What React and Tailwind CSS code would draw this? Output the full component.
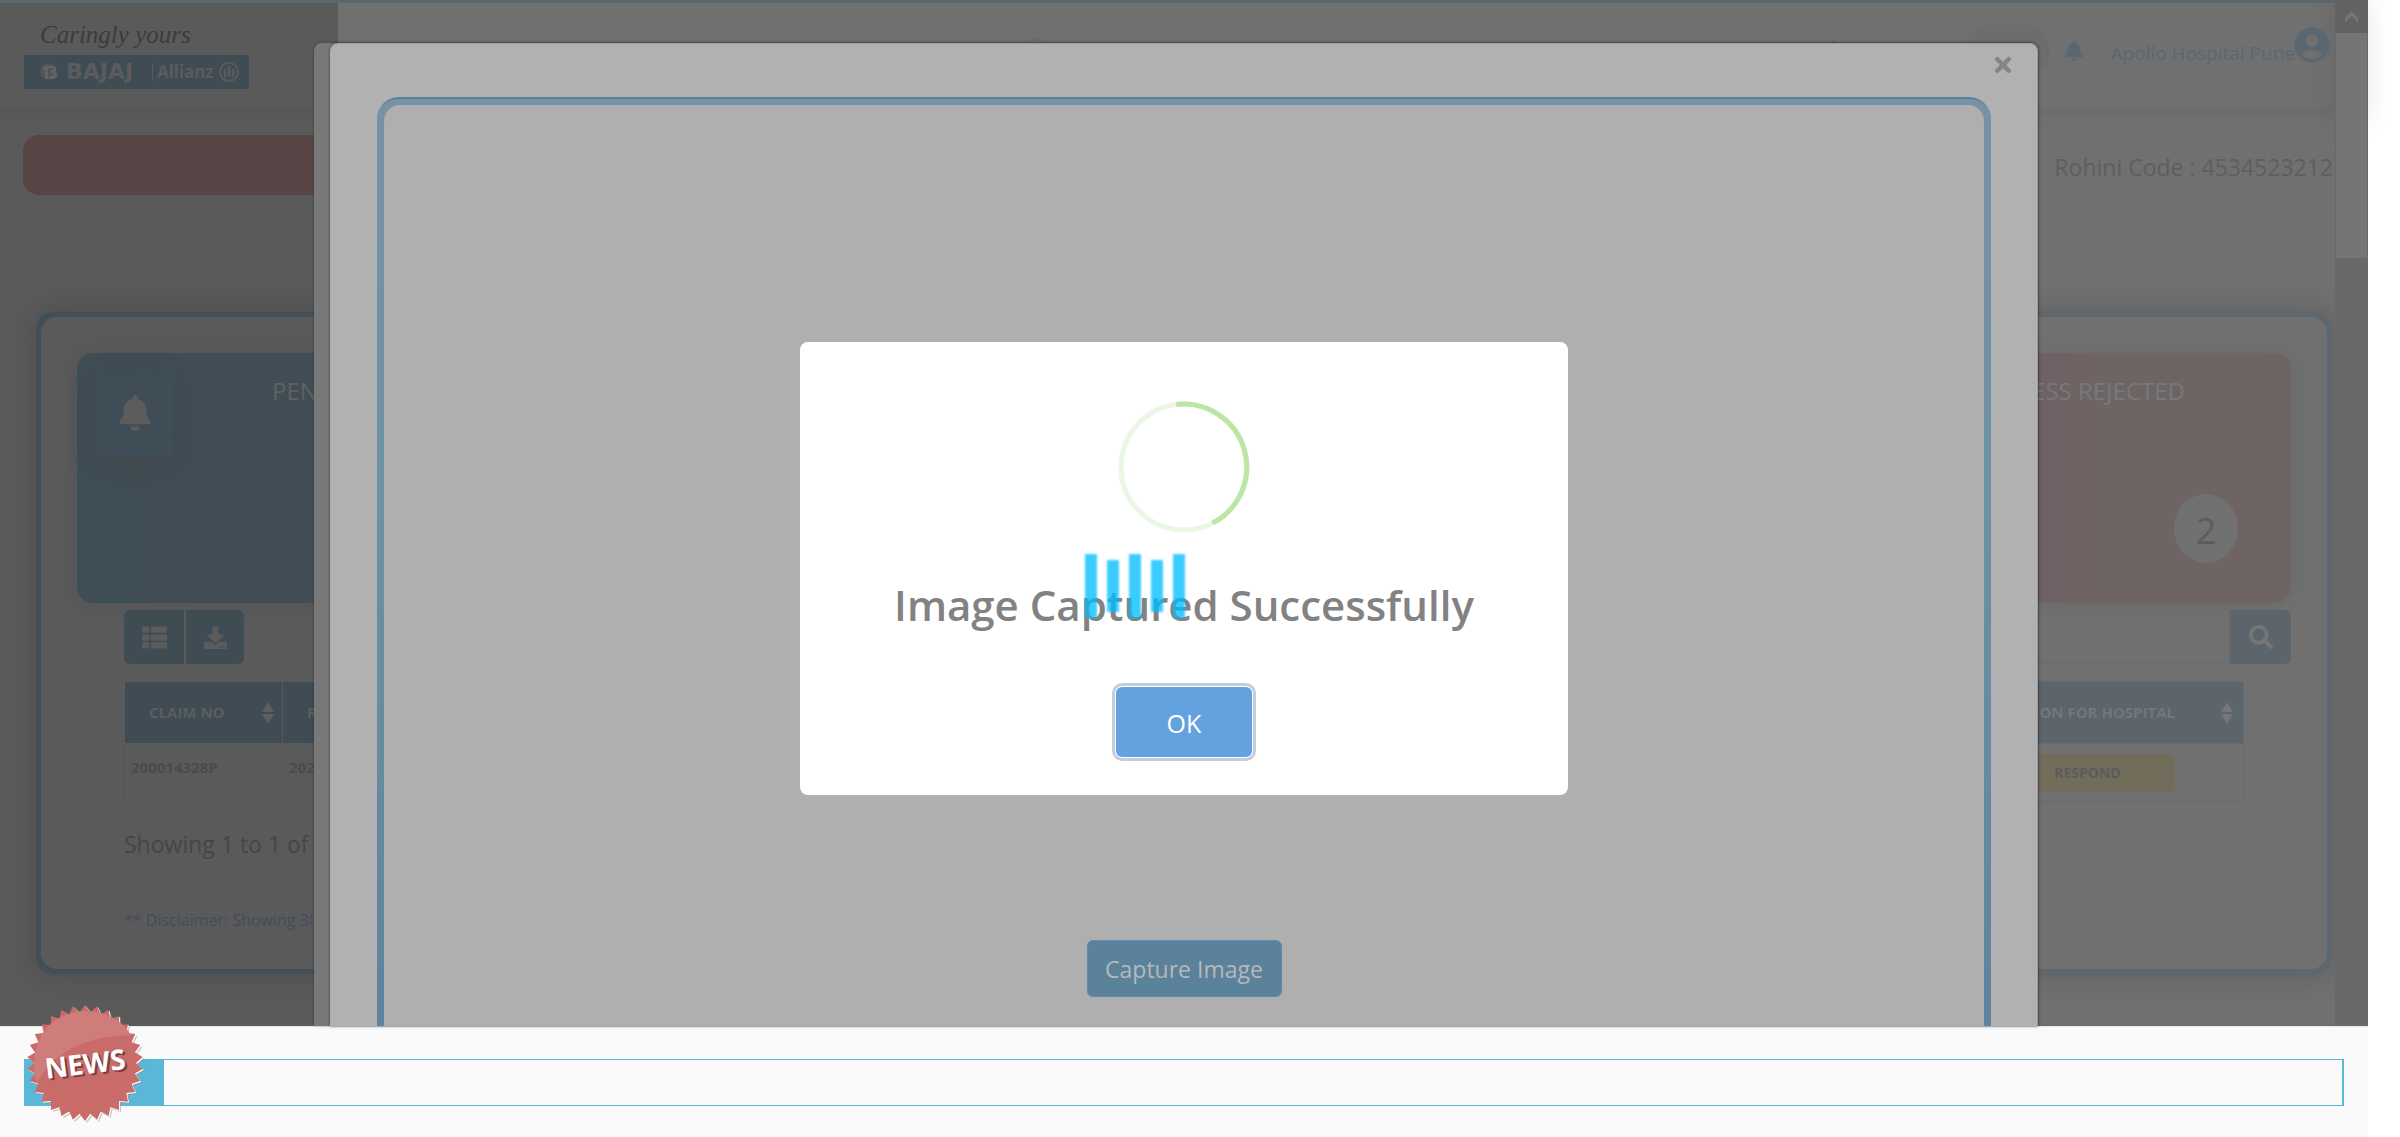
import React from "react";
import { FaBell, FaThList, FaDownload, FaSearch, FaTimes } from "react-icons/fa";
import { MdAccountCircle } from "react-icons/md";

function Logo() {
  return (
    <a href="#" className="flex w-[225px] flex-col">
      <span className="h-[37px] pl-4 font-['Z003','Liberation_Serif',cursive] text-[25px] leading-[34px] text-[#3c3c3c] italic">
        Caringly yours
      </span>
      <span className="flex h-[34px] items-center bg-[#3f4c54] pl-4 text-[#5b5b5d]">
        <svg viewBox="0 0 18 18" className="mr-2 size-[18px]" aria-hidden="true">
          <circle cx="8" cy="8" r="8" fill="#505559" />
          <path d="M3 4l5-2v14H5V7H3zM8 3h5q4 0 3 4l-1 2q3 1 2 4-1 3-4 3H9v-3h4v-3h-2V7h3V5H8z" fill="#636363" />
        </svg>
        <span className="w-[82px] font-['DejaVu_Sans',sans-serif] text-[22px] leading-5 font-bold">BAJAJ</span>
        <span className="mx-1 h-[18px] w-px bg-[#5b5b5d]" />
        <span className="w-[62px] font-['Noto_Sans',sans-serif] text-[17px] leading-5 font-bold">Allianz</span>
        <svg viewBox="0 0 20 20" className="size-5" fill="none" stroke="#5b5b5d" aria-hidden="true">
          <circle cx="10" cy="10" r="9" strokeWidth="2" />
          <path d="M6 7v8M10 4v11M14 7v8" strokeWidth="2.6" />
        </svg>
      </span>
    </a>
  );
}

function PageHeader() {
  return (
    <header className="flex h-[108px] items-start justify-between border-t-[3px] border-[#5b666c] pl-6 shadow-[0_8px_14px_-4px_rgba(0,0,0,0.06)]">
      <div className="pt-[15px]"><Logo /></div>
      <div className="mt-[35px] size-[26px] rounded-full border-[3px] border-[#65705f]" />
      <div className="flex items-center pt-[21px]">
        <FaBell className="mr-[119px] size-5 text-[#5a6770]" />
        <div className="mr-[14px] h-[52px] w-[88px] rounded-full bg-[#6d6d70]" />
        <button type="button" aria-label="Notifications" className="mr-[27px] text-[#5a6770]">
          <FaBell className="size-5" />
        </button>
        <span className="pt-1 text-[19px] leading-7 text-[#5b6871]">Apollo Hospital Pune</span>
        <MdAccountCircle className="mr-[2px] -ml-1 mb-3 size-[42px] text-[#5a6770]" />
      </div>
    </header>
  );
}

function SortArrows() {
  return (
    <svg viewBox="0 0 12 24" className="-mr-4 h-6 w-3" fill="currentColor" aria-hidden="true">
      <path d="M6 1l6 10H0zM0 13h12L6 23z" />
    </svg>
  );
}

function ClaimsTable() {
  const head = "border border-[#565b5e] px-6 text-left font-bold";
  const leftCell = "border border-[#565656] pt-[11px] pl-[6px] text-[15px] leading-6";
  return (
    <table className="mt-[17px] w-[2120px] table-fixed border-collapse text-[15px]">
      <thead>
        <tr className="h-[62px]">
          <th className={head + " w-[158px] bg-[#3f4c53] text-[#5c5e60]"}>
            <span className="flex items-center justify-between whitespace-nowrap">CLAIM NO<SortArrows /></span>
          </th>
          <th className={head + " w-[1649px] bg-[#3f4c53] text-[#5c5e60]"}>REGISTRATION DATE</th>
          <th className="border border-[#666b6e] bg-[#5b656b] pr-[26px] font-bold text-[#747679]">
            <span className="flex items-center justify-end gap-[46px] whitespace-nowrap">ACTION FOR HOSPITAL<SortArrows /></span>
          </th>
        </tr>
      </thead>
      <tbody>
        <tr className="h-[57px] align-top font-bold text-[#454d52]">
          <td className={leftCell}>200014328P</td>
          <td className={leftCell}>2021</td>
          <td className="border border-[#6b6b6b] px-[68px] pt-[10px]">
            <button type="button" className="h-[38px] w-full rounded-md bg-[#726c5a] text-sm font-bold text-[#5c5c5c]">
              RESPOND
            </button>
          </td>
        </tr>
      </tbody>
    </table>
  );
}

function Dashboard() {
  return (
    <section className="mt-[117px] mr-[3px] ml-9 h-[662px] rounded-2xl bg-[linear-gradient(to_right,#434f56_338px,#5e676d_338px)] p-[5px] shadow-[0_0_24px_4px_rgba(0,0,0,0.12)]">
      <div className="h-full rounded-2xl bg-[linear-gradient(to_right,#5a5a5a_300px,#707070_300px)] px-9 pt-9">
        <div className="flex h-[250px] justify-between">
          <div className="flex w-[500px] rounded-2xl bg-[linear-gradient(to_right,#3f4d54,#444e57)] shadow-[0_0_20px_rgba(0,0,0,0.08)]">
            <div className="mt-5 ml-[19px] grid h-[84px] w-[77px] place-items-center bg-[#3f4d56] pb-1 shadow-[0_8px_24px_rgba(64,64,64,0.4)]">
              <FaBell className="size-9 text-[#5c5c5c]" />
            </div>
            <h2 className="mt-5 ml-[99px] text-[24px] leading-9 text-[#5f6163]">PENDING</h2>
          </div>
          <div className="flex w-[500px] flex-col rounded-2xl bg-[linear-gradient(to_right,#6e5f63_45%,#6f6464_62%)] shadow-[0_0_20px_rgba(0,0,0,0.06)]">
            <h2 className="mt-5 pr-[106px] text-right text-[24px] leading-9 text-[#76797b]">CASHLESS REJECTED</h2>
            <div className="mt-[85px] mr-[53px] grid h-[69px] w-16 place-items-center self-end rounded-[50%] bg-[#717171] pt-1 text-[36px] text-[#5c5c5c]">2</div>
          </div>
        </div>
        <div className="mt-[7px] flex justify-between pl-[47px]">
          <div className="flex gap-[2px] text-[#5b5b5b]">
            <button type="button" aria-label="List view" className="grid h-[54px] w-[60px] place-items-center rounded-l-md bg-[#3f4c53]"><FaThList className="size-[25px]" /></button>
            <button type="button" aria-label="Download" className="grid h-[54px] w-[58px] place-items-center rounded-r-md bg-[#3f4c53]"><FaDownload className="size-[23px]" /></button>
          </div>
          <div className="flex">
            <input type="search" aria-label="Search claims" className="h-[54px] w-[340px] border border-[#6b6b6b]" />
            <button type="button" aria-label="Search" className="grid h-[54px] w-[61px] place-items-center rounded-r-md bg-[#5b656b] text-[#767676]"><FaSearch className="size-6" /></button>
          </div>
        </div>
        <div className="pl-[47px]">
          <ClaimsTable />
          <p className="mt-[25px] text-[23px] leading-9 text-[#464646]">Showing 1 to 1 of 1 entries</p>
          <p className="mt-[44px] text-base leading-7 text-[#424d5c]">** Disclaimer: Showing 30 days data</p>
        </div>
      </div>
    </section>
  );
}

function Scrollbar() {
  return (
    <div className="w-[33px] bg-[#696969]">
      <div className="grid h-[33px] place-items-center bg-[#636363]">
        <svg viewBox="0 0 13 12" className="h-3 w-[13px]" fill="#757575" aria-hidden="true"><path d="M0 7L6.500 0L13 7V12L6.500 5L0 12z" /></svg>
      </div>
      <div className="mx-px h-[225px] bg-[#757575]" />
    </div>
  );
}

function CaptureModal() {
  return (
    <div className="absolute inset-x-0 top-[43px] bottom-0 flex pr-[330px] pl-[314px]">
      <div className="flex flex-1 rounded-t-lg bg-[#787878] pl-4 shadow-[0_0_3px_rgba(0,0,0,0.3)]">
        <div className="flex flex-1 flex-col rounded-t-lg border-t border-r border-[#9c9c9c] bg-[#b1b1b1] pr-[46px] pl-[47px] shadow-[0_0_3px_rgba(0,0,0,0.5)]">
          <button type="button" aria-label="Close" className="mt-[9px] -mr-6 grid size-6 place-items-center self-end text-[#858585]">
            <FaTimes className="size-6" />
          </button>
          <div className="mt-5 flex flex-1 rounded-t-[22px] border-t-2 border-[#5b7f96] bg-[linear-gradient(to_bottom,#7792a5,#6d90a4_45%,#5f839c)] px-[7px] pt-[6px]">
            <div className="flex flex-1 items-end justify-center rounded-t-2xl bg-[#afafaf] pb-[29px]">
              <button type="button" className="h-[57px] w-[195px] rounded-md border border-[#6288b4] bg-[#5b829b] pt-[2px] text-[23px] text-[#b5b8ba]">
                Capture Image
              </button>
            </div>
          </div>
        </div>
      </div>
    </div>
  );
}

function SuccessAlert() {
  return (
    <div className="absolute inset-x-0 top-[342px] flex justify-center">
      <div role="alertdialog" aria-labelledby="alert-title" className="relative flex h-[453px] w-[768px] flex-col items-center rounded-lg bg-white">
        <svg viewBox="0 0 130 130" className="mt-[59px] size-[132px]" fill="none" strokeWidth="5" aria-hidden="true">
          <circle cx="65" cy="65" r="62" stroke="#ebf6e4" />
          <path d="M57.400 3.500A62 62 0 0 1 93.100 120.200" stroke="#bce6a5" />
        </svg>
        <h1 id="alert-title" className="mt-10 text-[42px] leading-[64px] font-semibold whitespace-nowrap text-[#828282]">
          Image Captured Successfully
        </h1>
        <button type="button" className="mt-[50px] h-[70px] w-[136px] rounded-md bg-[#63a1df] pt-1 text-[25px] text-white shadow-[0_0_0_1px_#ffffff,0_0_0_4px_#c0cfde]">
          OK
        </button>
        <div className="absolute top-[212px] left-[285px] flex items-center gap-[10px]" role="status" aria-label="Loading">
          <span className="h-16 w-3 bg-[rgba(0,188,255,0.77)] blur-[1px]" />
          <span className="h-[52px] w-3 bg-[rgba(0,188,255,0.77)] blur-[1px]" />
          <span className="h-16 w-3 bg-[rgba(0,188,255,0.77)] blur-[1px]" />
          <span className="h-[52px] w-3 bg-[rgba(0,188,255,0.77)] blur-[1px]" />
          <span className="h-16 w-3 bg-[rgba(0,188,255,0.77)] blur-[1px]" />
        </div>
      </div>
    </div>
  );
}

const sealPoints = Array.from({ length: 60 }, (_, i) => {
  const r = i % 2 ? 51 : 58;
  const a = (i * Math.PI) / 30 - Math.PI / 2;
  return `${(60 + r * Math.cos(a)).toFixed(1)},${(60 + r * Math.sin(a)).toFixed(1)}`;
}).join(" ");

function NewsBar() {
  return (
    <footer className="h-[111px] border-t border-[#e6e6ee] bg-[#fafafa] pt-8 pr-6 pl-6">
      <div className="relative h-[47px] border border-r-2 border-[#5bb7d7]">
        <div className="h-full w-[139px] bg-[#5bb7d7]" />
        <svg viewBox="0 0 120 120" className="absolute -top-[57px] left-0 size-[120px]" role="img" aria-label="News">
          <polygon points={sealPoints} fill="#8b8b8b" opacity="0.5" transform="translate(2 2)" />
          <polygon points={sealPoints} fill="#ffffff" transform="translate(1 1)" />
          <polygon points={sealPoints} fill="#c96b69" />
          <path d="M12 80Q36 34 106 32Q92 9 60 8Q12 12 9 60Q9 72 12 80z" fill="#cf7d7a" />
          <g transform="rotate(-7 60 60)" fontFamily="Open Sans, sans-serif" fontWeight="700" fontSize="28" textAnchor="middle">
            <text x="62" y="73" fill="#7b3f3f">NEWS</text>
            <text x="60" y="71" fill="#ffffff">NEWS</text>
          </g>
        </svg>
      </div>
    </footer>
  );
}

export default function App() {
  return (
    <div className="min-h-screen overflow-hidden bg-white pr-8 font-['Open_Sans','Noto_Sans',sans-serif]">
      <div className="flex min-h-screen flex-col">
        <main className="relative isolate flex flex-1 bg-[linear-gradient(to_right,#5a5a5a_338px,#707070_338px)]">
          <div className="absolute top-0 right-0 -z-10 h-[116px] w-8 shadow-[0_4px_28px_rgba(0,0,0,0.1)]" />
          <div className="min-w-0 flex-1 overflow-hidden">
            <PageHeader />
            <div className="mt-[27px] flex h-[60px] items-center justify-between">
              <div className="ml-[23px] h-full w-[900px] rounded-2xl bg-[#574545]" />
              <span className="pt-1 pr-[2px] text-[23px] text-[#5e5e5e]">Rohini Code : 4534523212</span>
            </div>
            <Dashboard />
          </div>
          <Scrollbar />
          <CaptureModal />
          <SuccessAlert />
        </main>
        <NewsBar />
      </div>
    </div>
  );
}
